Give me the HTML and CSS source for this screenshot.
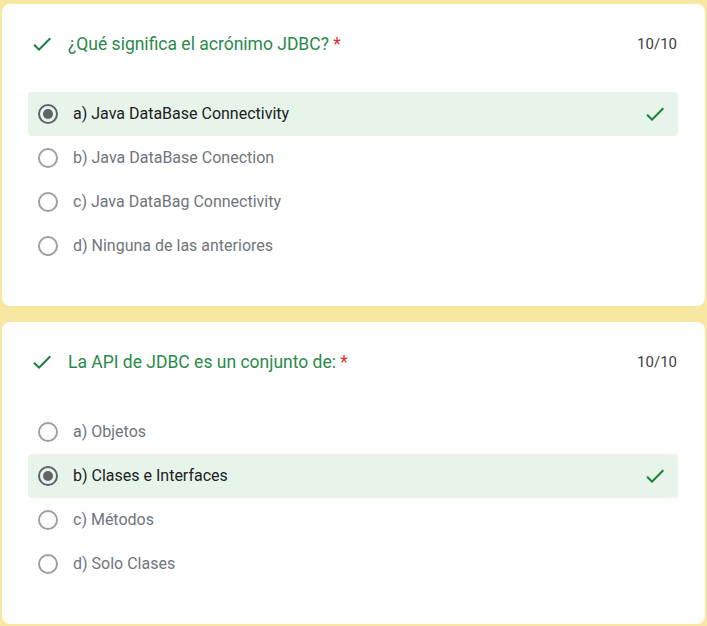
FILE: index.html
```html
<!DOCTYPE html>
<html lang="es">
<head>
<meta charset="utf-8">
<title>Cuestionario JDBC</title>
<link rel="stylesheet" href="styles.css">
</head>
<body>
<div class="page">
  <section class="card">
    <div class="header">
      <svg class="check" viewBox="0 0 24 24"><path d="M9 16.17L4.83 12l-1.42 1.41L9 19 21 7l-1.41-1.41z"/></svg>
      <div class="title">¿Qué significa el acrónimo JDBC? <span class="req">*</span></div>
      <div class="score">10/10</div>
    </div>
    <div class="options">
      <div class="option correct"><span class="radio on"></span><span class="label">a) Java DataBase Connectivity</span><svg class="check" viewBox="0 0 24 24"><path d="M9 16.17L4.83 12l-1.42 1.41L9 19 21 7l-1.41-1.41z"/></svg></div>
      <div class="option"><span class="radio"></span><span class="label">b) Java DataBase Conection</span></div>
      <div class="option"><span class="radio"></span><span class="label">c) Java DataBag Connectivity</span></div>
      <div class="option"><span class="radio"></span><span class="label">d) Ninguna de las anteriores</span></div>
    </div>
  </section>
  <section class="card">
    <div class="header">
      <svg class="check" viewBox="0 0 24 24"><path d="M9 16.17L4.83 12l-1.42 1.41L9 19 21 7l-1.41-1.41z"/></svg>
      <div class="title">La API de JDBC es un conjunto de: <span class="req">*</span></div>
      <div class="score">10/10</div>
    </div>
    <div class="options">
      <div class="option"><span class="radio"></span><span class="label">a) Objetos</span></div>
      <div class="option correct"><span class="radio on"></span><span class="label">b) Clases e Interfaces</span><svg class="check" viewBox="0 0 24 24"><path d="M9 16.17L4.83 12l-1.42 1.41L9 19 21 7l-1.41-1.41z"/></svg></div>
      <div class="option"><span class="radio"></span><span class="label">c) Métodos</span></div>
      <div class="option"><span class="radio"></span><span class="label">d) Solo Clases</span></div>
    </div>
  </section>
</div>
</body>
</html>
```
FILE: styles.css
```css
html, body {
  margin: 0;
  padding: 0;
  background: #f7e7a1;
}
body {
  font-family: Roboto, "Liberation Sans", Arial, sans-serif;
}
.page {
  display: flex;
  flex-direction: column;
  gap: 16px;
  padding: 4px 2px 0 2px;
}
.card {
  background: #ffffff;
  border-radius: 8px;
  padding: 28px 27px 38px 26px;
  height: 302px;
  box-sizing: border-box;
}
.header {
  display: flex;
  align-items: center;
  height: 24px;
}
.header .check {
  width: 24px;
  height: 24px;
  margin-left: 2px;
  margin-right: 14px;
  fill: #188038;
  flex: none;
}
.title {
  flex: 1;
  font-size: 17.5px;
  color: #2a8a4a;
  line-height: 24px;
}
.req {
  color: #d93025;
}
.score {
  font-size: 15px;
  color: #3c4043;
  margin-right: 1px;
}
.options {
  margin-top: 36px;
  display: flex;
  flex-direction: column;
}
.option {
  display: flex;
  align-items: center;
  height: 44px;
  padding: 0 11px 0 10px;
  border-radius: 4px;
}
.option.correct {
  background: #e6f4ea;
}
.radio {
  width: 16px;
  height: 16px;
  border: 2px solid #9aa0a6;
  border-radius: 50%;
  flex: none;
  display: flex;
  align-items: center;
  justify-content: center;
}
.radio.on {
  border-color: #5f6368;
}
.radio.on::after {
  content: "";
  width: 10px;
  height: 10px;
  border-radius: 50%;
  background: #5f6368;
}
.label {
  flex: 1;
  margin-left: 15px;
  font-size: 16px;
  line-height: 20px;
  padding-bottom: 1px;
  color: #70757a;
}
.option.correct .label {
  color: #202124;
}
.option .check {
  width: 24px;
  height: 24px;
  fill: #188038;
  flex: none;
}
```
